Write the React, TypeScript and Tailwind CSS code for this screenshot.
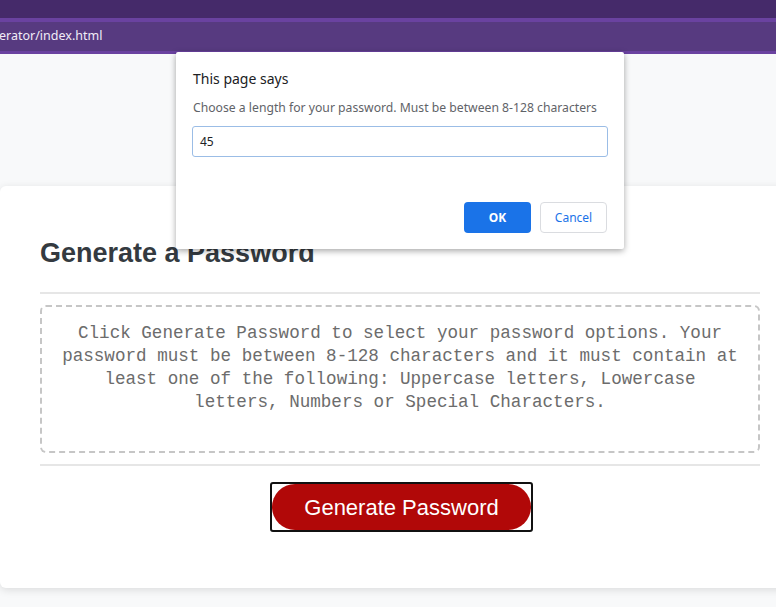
import React from "react";

export default function App() {
  return (
    <div className="relative w-[776px] h-[607px] overflow-hidden bg-[#f8f9fa]">
      {/* browser chrome */}
      <div className="h-[18px] bg-[#452a6a]" />
      <div className="h-[4px] bg-[#6a42a0]" />
      <div className="h-[29px] bg-[#573a80] flex items-center">
        <span className="text-[12.5px] leading-none text-[#f1ecf7] -ml-px font-['Noto_Sans',sans-serif]">erator/index.html</span>
      </div>
      <div className="h-[3px] bg-[#6a42a0]" />

      {/* page */}
      <div className="pt-[132px] font-['Liberation_Sans',Arial,sans-serif]">
        <div className="w-[800px] h-[402px] bg-white rounded-md shadow-[0_2px_8px_rgba(0,0,0,0.12)] px-[40px] pt-[51px]">
          <h2 className="text-[27px] leading-[32px] font-bold text-[#343a40]">Generate a Password</h2>
          <div className="mt-[23px] h-[2px] bg-[#e6e6e6]" />
          <div className="mt-[11px] h-[148px] border-2 border-dashed border-[#c6c6c6] rounded-md pt-[15px] px-[18px] text-center">
            <p className="font-['Liberation_Mono',monospace] text-[17.6px] leading-[23px] text-[#6c6c6c]">
              Click Generate Password to select your password options. Your password must be between 8-128 characters and it must contain at least one of the following: Uppercase letters, Lowercase letters, Numbers or Special Characters.
            </p>
          </div>
          <div className="mt-[11px] h-[2px] bg-[#e6e6e6]" />
          <div className="mt-[16px] flex justify-center">
            <div className="w-[263px] h-[50px] border-2 border-[#111] rounded-[3px] bg-white ml-[3px]">
              <div className="h-full rounded-full bg-[#b10808] flex items-center justify-center text-white text-[22px]">
                Generate Password
              </div>
            </div>
          </div>
        </div>
      </div>

      {/* dialog */}
      <div className="absolute left-[176px] top-[52px] w-[448px] h-[197px] bg-white rounded-[2px] shadow-[0_2px_6px_rgba(0,0,0,0.35)] px-[16px] pt-[17px] font-['Noto_Sans',sans-serif]">
        <div className="text-[14px] leading-[20px] text-[#202124] pl-px">This page says</div>
        <div className="mt-[11px] text-[12.2px] leading-[16px] text-[#5f6368] pl-px">Choose a length for your password. Must be between 8-128 characters</div>
        <div className="mt-[10px] w-[416px] h-[31px] border border-[#9bbde6] rounded-[3px] flex items-center pl-[7px] text-[12px] text-[#202124]">45</div>
        <div className="mt-[45px] flex justify-end gap-[9px] pr-[1px]">
          <div className="w-[67px] h-[31px] bg-[#1a73e8] rounded-[4px] flex items-center justify-center text-white text-[12px] font-bold">OK</div>
          <div className="w-[67px] h-[31px] border border-[#dadce0] rounded-[4px] flex items-center justify-center text-[#1a73e8] text-[12px]">Cancel</div>
        </div>
      </div>
    </div>
  );
}
